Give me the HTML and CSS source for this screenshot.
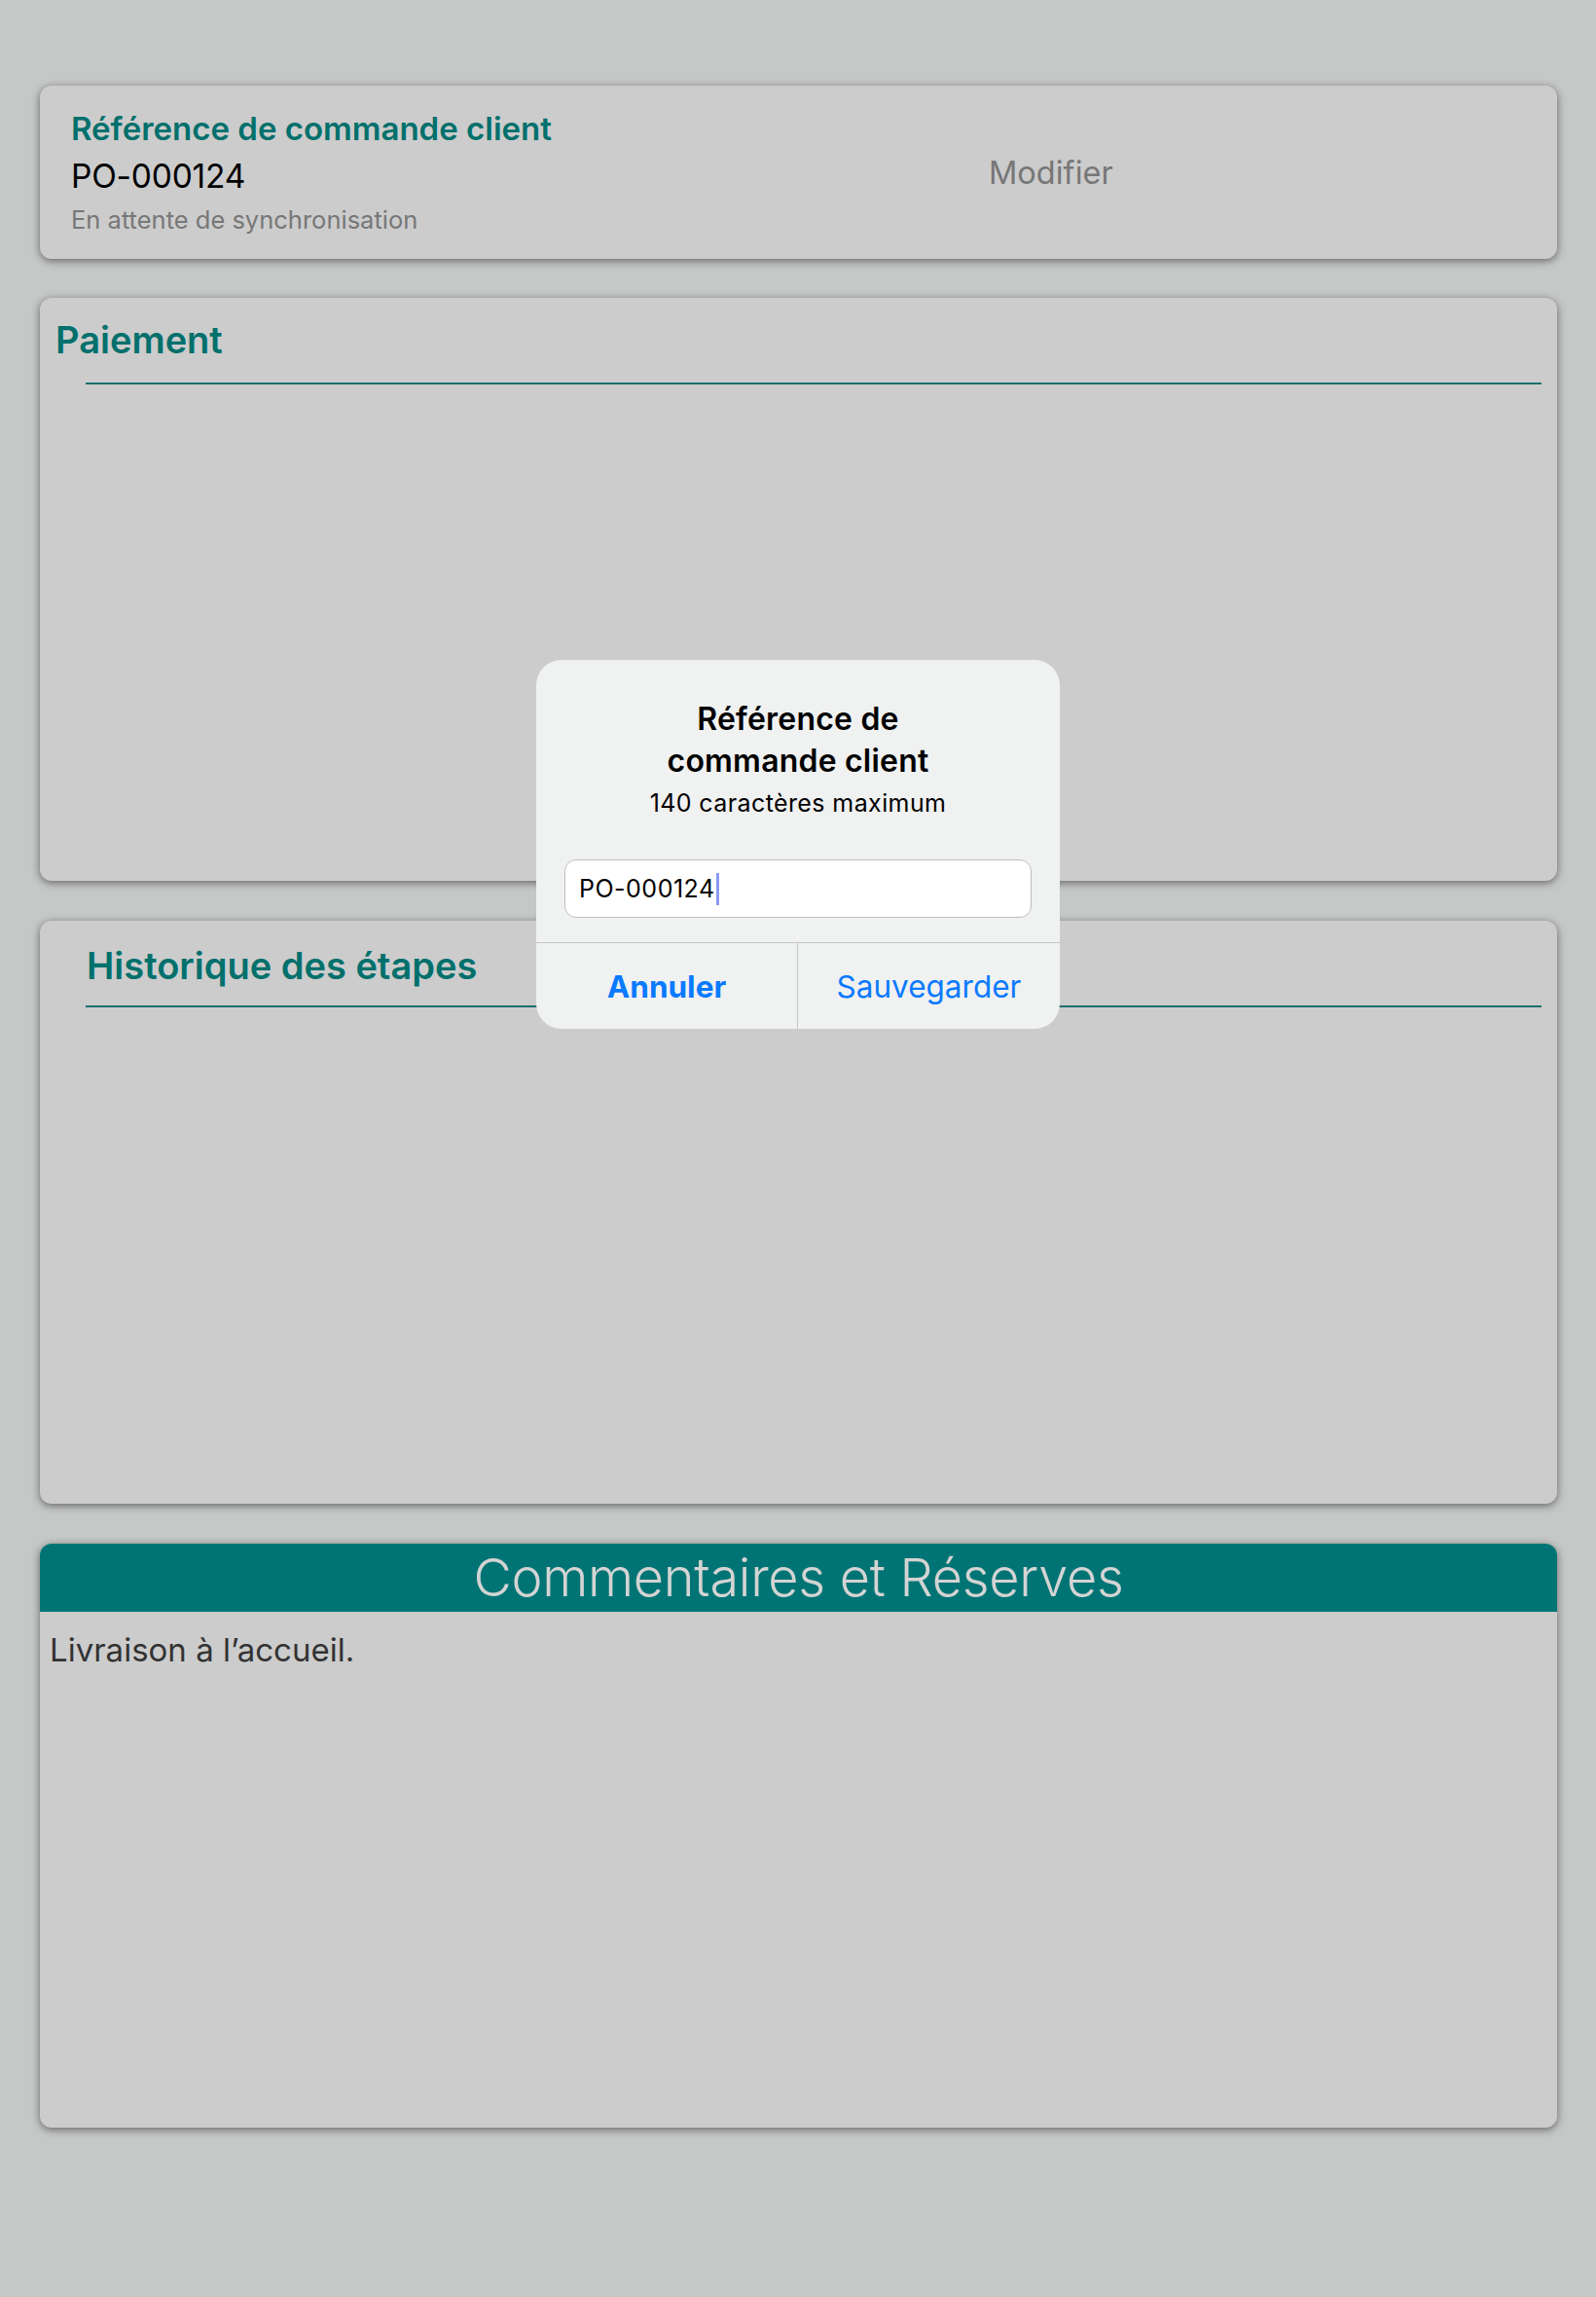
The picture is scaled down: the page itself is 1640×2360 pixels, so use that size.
FILE: index.html
```html
<!DOCTYPE html>
<html lang="fr">
<head>
<meta charset="utf-8">
<title>Commande</title>
<link rel="stylesheet" href="styles.css">
</head>
<body>
<main class="page">
  <section class="card card-ref">
    <div class="ref-info">
      <div class="ref-title">Référence de commande client</div>
      <div class="ref-value">PO-000124</div>
      <div class="ref-status">En attente de synchronisation</div>
    </div>
    <div class="ref-action">Modifier</div>
  </section>

  <section class="card card-block">
    <h2 class="block-title title-pay">Paiement</h2>
    <div class="block-rule"></div>
  </section>

  <section class="card card-block">
    <h2 class="block-title title-hist">Historique des étapes</h2>
    <div class="block-rule rule-hist"></div>
  </section>

  <section class="card card-comments">
    <header class="comments-head">Commentaires et Réserves</header>
    <p class="comments-text">Livraison à l’accueil.</p>
  </section>
</main>

<div class="alert" role="dialog">
  <div class="alert-body">
    <div class="alert-title">Référence de<br>commande client</div>
    <div class="alert-sub">140 caractères maximum</div>
    <div class="alert-input"><span class="input-text">PO-000124</span><span class="caret"></span></div>
  </div>
  <div class="alert-actions">
    <div class="alert-btn btn-cancel">Annuler</div>
    <div class="alert-btn btn-save">Sauvegarder</div>
  </div>
</div>
</body>
</html>
```

FILE: styles.css
```css
html, body {
  margin: 0;
  padding: 0;
}
body {
  width: 1640px;
  height: 2360px;
  background: #c6c8c7;
  font-family: Inter, "Noto Sans", "Liberation Sans", sans-serif;
  position: relative;
  overflow: hidden;
}
.page {
  display: flex;
  flex-direction: column;
  gap: 41px;
  padding: 88px 40px 0 41px;
}
.card {
  background: #cccccc;
  border-radius: 12px;
  box-shadow: 0 2px 8px rgba(0, 0, 0, 0.5);
  box-sizing: border-box;
}
.card-ref {
  height: 178px;
  margin-bottom: -1px;
  display: flex;
  align-items: center;
  padding-left: 32px;
}
.ref-info {
  width: 943px;
  display: flex;
  flex-direction: column;
}
.ref-title {
  color: #00706c;
  font-size: 33px;
  font-weight: 600;
  line-height: 38px;
}
.ref-value {
  color: #000;
  font-size: 33.5px;
  line-height: 40px;
  margin-top: 10px;
  letter-spacing: -0.2px;
}
.ref-status {
  color: #777777;
  font-size: 25.5px;
  line-height: 30px;
  margin-top: 10px;
}
.ref-action {
  color: #777777;
  font-size: 32.5px;
  line-height: 40px;
  margin-top: 2px;
}
.card-block {
  height: 599px;
  padding-top: 20px;
}
.block-title {
  margin: 0;
  color: #00706c;
  font-size: 38px;
  font-weight: 600;
  line-height: 46px;
}
.title-pay {
  padding-left: 16px;
}
.title-hist {
  padding-left: 48px;
  padding-top: 3px;
}
.block-rule {
  height: 1.5px;
  background: #1b6f6d;
  margin: 21px 16px 0 47px;
}
.rule-hist {
  margin-top: 18px;
}
.card-comments {
  height: 600px;
  overflow: hidden;
}
.comments-head {
  height: 70px;
  background: #007474;
  color: #d4d4d4;
  font-size: 54px;
  font-weight: 300;
  line-height: 70px;
  text-align: center;
  letter-spacing: -0.3px;
}
.comments-text {
  margin: 0;
  padding: 19px 0 0 10px;
  color: #333333;
  font-size: 33px;
  line-height: 40px;
}

/* alert overlay */
.alert {
  position: absolute;
  left: 551px;
  top: 678px;
  width: 538px;
  height: 379px;
  background: #f0f1f1;
  border-radius: 26px;
  display: flex;
  flex-direction: column;
  overflow: hidden;
}
.alert-body {
  padding: 39px 29px 0 29px;
  text-align: center;
  height: 290px;
  box-sizing: border-box;
}
.alert-title {
  color: #000;
  font-size: 32px;
  font-weight: 600;
  line-height: 43px;
  letter-spacing: 0.2px;
}
.alert-sub {
  color: #000;
  font-size: 25px;
  line-height: 30px;
  margin-top: 7px;
  letter-spacing: 0.4px;
}
.alert-input {
  margin-top: 43px;
  height: 60px;
  box-sizing: border-box;
  background: #ffffff;
  border: 1px solid #bdbdbd;
  border-radius: 12px;
  display: flex;
  align-items: center;
  padding-left: 14px;
  text-align: left;
}
.input-text {
  color: #000;
  font-size: 25px;
  line-height: 30px;
  letter-spacing: 0.5px;
}
.caret {
  display: inline-block;
  width: 3px;
  height: 33px;
  background: #8c9cf3;
  margin-left: 1px;
}
.alert-actions {
  flex: 1;
  display: grid;
  grid-template-columns: 1fr 1fr;
  border-top: 1px solid #c6c6c6;
}
.alert-btn {
  display: flex;
  align-items: center;
  justify-content: center;
  color: #0a7aff;
  font-size: 31.5px;
}
.btn-cancel {
  font-weight: 700;
  border-right: 1px solid #c6c6c6;
}
.btn-save {
  font-weight: 400;
}
```
